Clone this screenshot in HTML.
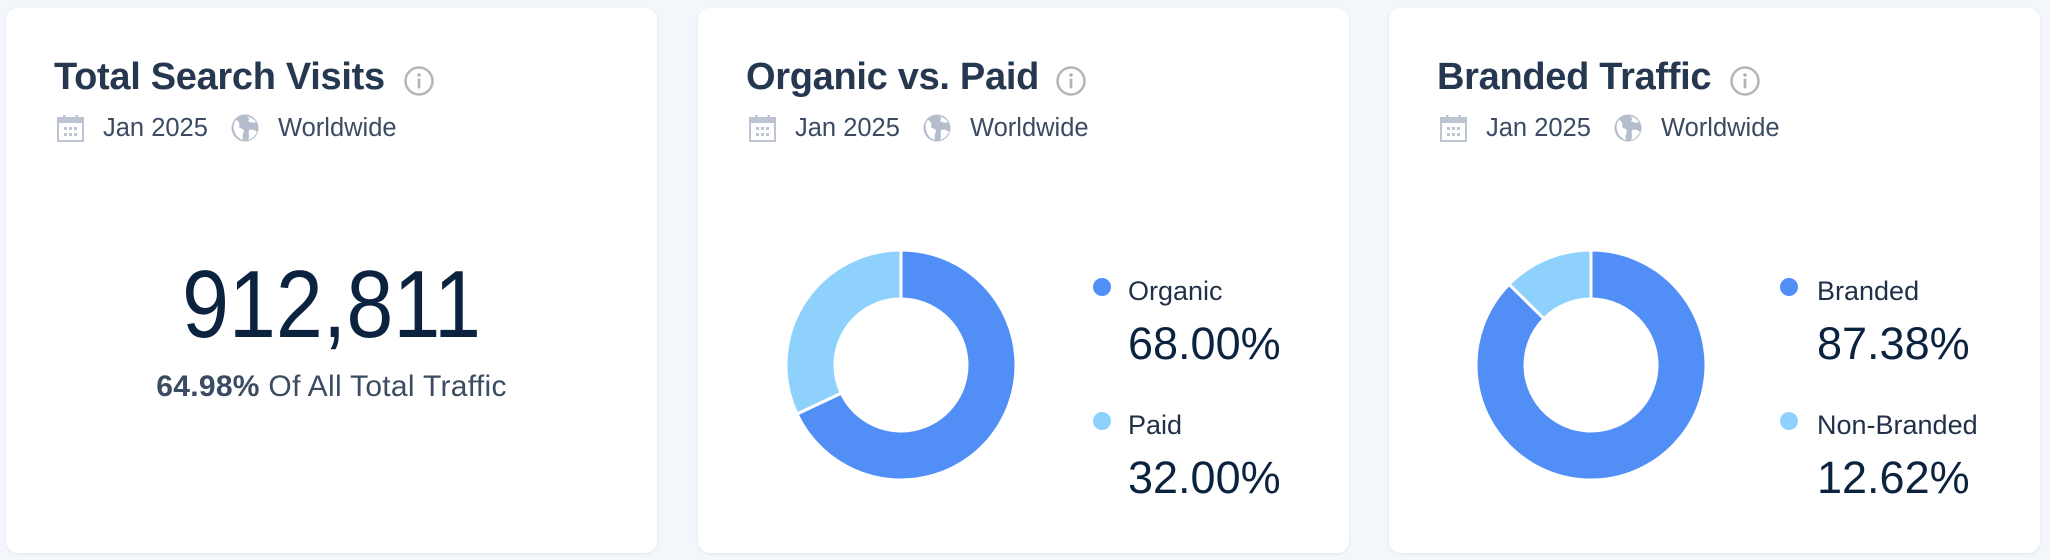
<!DOCTYPE html>
<html><head><meta charset="utf-8"><style>
*{margin:0;padding:0;box-sizing:border-box}
body{width:2050px;height:560px;background:#F3F6FA;font-family:"Liberation Sans",sans-serif;position:relative;overflow:hidden}
.card{position:absolute;top:8px;height:545px;width:651px;background:#fff;border-radius:12px;box-shadow:0 1px 3px rgba(40,60,90,.08)}
.t{position:absolute;left:48px;top:48px;font-size:38px;font-weight:bold;color:#26384F;white-space:nowrap;letter-spacing:-0.3px}
.abs{position:absolute}
.meta{position:absolute;top:106px;font-size:25.5px;color:#3A4B62;white-space:nowrap}
.big{position:absolute;left:0;width:651px;text-align:center;top:249px;font-size:96px;color:#0C2340;line-height:1;transform:scaleX(0.88)}
.sub{position:absolute;left:0;width:651px;text-align:center;top:362px;font-size:30px;color:#3A4B62;white-space:nowrap;letter-spacing:0.3px}
.lab{position:absolute;font-size:27px;color:#1F3048;white-space:nowrap}
.pct{position:absolute;font-size:45px;color:#0C2340;white-space:nowrap;line-height:1}
.dot{position:absolute;width:18px;height:18px;border-radius:50%}
</style></head><body>

<div class="card" style="left:6px">
  <div class="t">Total Search Visits</div>
  <svg class="abs" style="left:397px;top:57px" width="32" height="32" viewBox="0 0 32 32"><circle cx="16" cy="16" r="13.5" fill="none" stroke="#B5B5B5" stroke-width="2.5"/><circle cx="16" cy="10" r="1.8" fill="#B5B5B5"/><rect x="14.6" y="13.5" width="2.8" height="10" rx="1" fill="#B5B5B5"/></svg>
  <svg class="abs" style="left:51px;top:106px" width="27" height="28" viewBox="0 0 27 28"><rect x="1" y="4" width="25" height="23" fill="none" stroke="#BCC4D1" stroke-width="2"/><rect x="1" y="4" width="25" height="5" fill="#BCC4D1"/><rect x="6" y="1" width="2.5" height="5" fill="#BCC4D1"/><rect x="18.5" y="1" width="2.5" height="5" fill="#BCC4D1"/><g fill="#BCC4D1"><rect x="7" y="13" width="3" height="3"/><rect x="12" y="13" width="3" height="3"/><rect x="17" y="13" width="3" height="3"/><rect x="7" y="19" width="3" height="3"/><rect x="12" y="19" width="3" height="3"/><rect x="17" y="19" width="3" height="3"/></g></svg>
  <div class="meta" style="left:97px">Jan 2025</div>
  <svg class="abs" style="left:225px;top:106px" width="28" height="28" viewBox="0 0 28 28"><circle cx="14" cy="14" r="13.5" fill="#B3BDCB"/><path d="M5 6 C8 7 9 10 8 13 C10 15 12 14 13 17 C12 20 11 22 12 26 C8 25 4 21 3 16 C2 12 3 8 5 6Z" fill="#fff"/><path d="M15 2 C18 3 19 5 17 7 C20 9 23 9 25 8 C24 6 20 3 15 2Z" fill="#fff"/><path d="M18 16 C21 15 24 16 26 18 C24 22 21 25 17 26 C19 23 17 19 18 16Z" fill="#fff"/></svg>
  <div class="meta" style="left:272px">Worldwide</div>
  <div class="big">912,811</div>
  <div class="sub"><b>64.98%</b> Of All Total Traffic</div>
</div>

<div class="card" style="left:698px">
  <div class="t">Organic vs. Paid</div>
  <svg class="abs" style="left:357px;top:57px" width="32" height="32" viewBox="0 0 32 32"><circle cx="16" cy="16" r="13.5" fill="none" stroke="#B5B5B5" stroke-width="2.5"/><circle cx="16" cy="10" r="1.8" fill="#B5B5B5"/><rect x="14.6" y="13.5" width="2.8" height="10" rx="1" fill="#B5B5B5"/></svg>
  <svg class="abs" style="left:51px;top:106px" width="27" height="28" viewBox="0 0 27 28"><rect x="1" y="4" width="25" height="23" fill="none" stroke="#BCC4D1" stroke-width="2"/><rect x="1" y="4" width="25" height="5" fill="#BCC4D1"/><rect x="6" y="1" width="2.5" height="5" fill="#BCC4D1"/><rect x="18.5" y="1" width="2.5" height="5" fill="#BCC4D1"/><g fill="#BCC4D1"><rect x="7" y="13" width="3" height="3"/><rect x="12" y="13" width="3" height="3"/><rect x="17" y="13" width="3" height="3"/><rect x="7" y="19" width="3" height="3"/><rect x="12" y="19" width="3" height="3"/><rect x="17" y="19" width="3" height="3"/></g></svg>
  <div class="meta" style="left:97px">Jan 2025</div>
  <svg class="abs" style="left:225px;top:106px" width="28" height="28" viewBox="0 0 28 28"><circle cx="14" cy="14" r="13.5" fill="#B3BDCB"/><path d="M5 6 C8 7 9 10 8 13 C10 15 12 14 13 17 C12 20 11 22 12 26 C8 25 4 21 3 16 C2 12 3 8 5 6Z" fill="#fff"/><path d="M15 2 C18 3 19 5 17 7 C20 9 23 9 25 8 C24 6 20 3 15 2Z" fill="#fff"/><path d="M18 16 C21 15 24 16 26 18 C24 22 21 25 17 26 C19 23 17 19 18 16Z" fill="#fff"/></svg>
  <div class="meta" style="left:272px">Worldwide</div>
  <svg class="abs" style="left:83px;top:237px" width="240" height="240" viewBox="-120 -120 240 240">
    <path d="M0,-115 A115,115 0 1 1 -104.05,48.97 L-59.72,28.10 A66,66 0 1 0 0,-66 Z" fill="#518FF7" stroke="#fff" stroke-width="3" stroke-linejoin="round"/>
    <path d="M-104.05,48.97 A115,115 0 0 1 0,-115 L0,-66 A66,66 0 0 0 -59.72,28.10 Z" fill="#8FD1FD" stroke="#fff" stroke-width="3" stroke-linejoin="round"/>
  </svg>
  <div class="dot" style="left:395px;top:270px;background:#518FF7"></div>
  <div class="lab" style="left:430px;top:268px">Organic</div>
  <div class="pct" style="left:430px;top:313px">68.00%</div>
  <div class="dot" style="left:395px;top:404px;background:#8FD1FD"></div>
  <div class="lab" style="left:430px;top:402px">Paid</div>
  <div class="pct" style="left:430px;top:447px">32.00%</div>
</div>

<div class="card" style="left:1389px">
  <div class="t">Branded Traffic</div>
  <svg class="abs" style="left:340px;top:57px" width="32" height="32" viewBox="0 0 32 32"><circle cx="16" cy="16" r="13.5" fill="none" stroke="#B5B5B5" stroke-width="2.5"/><circle cx="16" cy="10" r="1.8" fill="#B5B5B5"/><rect x="14.6" y="13.5" width="2.8" height="10" rx="1" fill="#B5B5B5"/></svg>
  <svg class="abs" style="left:51px;top:106px" width="27" height="28" viewBox="0 0 27 28"><rect x="1" y="4" width="25" height="23" fill="none" stroke="#BCC4D1" stroke-width="2"/><rect x="1" y="4" width="25" height="5" fill="#BCC4D1"/><rect x="6" y="1" width="2.5" height="5" fill="#BCC4D1"/><rect x="18.5" y="1" width="2.5" height="5" fill="#BCC4D1"/><g fill="#BCC4D1"><rect x="7" y="13" width="3" height="3"/><rect x="12" y="13" width="3" height="3"/><rect x="17" y="13" width="3" height="3"/><rect x="7" y="19" width="3" height="3"/><rect x="12" y="19" width="3" height="3"/><rect x="17" y="19" width="3" height="3"/></g></svg>
  <div class="meta" style="left:97px">Jan 2025</div>
  <svg class="abs" style="left:225px;top:106px" width="28" height="28" viewBox="0 0 28 28"><circle cx="14" cy="14" r="13.5" fill="#B3BDCB"/><path d="M5 6 C8 7 9 10 8 13 C10 15 12 14 13 17 C12 20 11 22 12 26 C8 25 4 21 3 16 C2 12 3 8 5 6Z" fill="#fff"/><path d="M15 2 C18 3 19 5 17 7 C20 9 23 9 25 8 C24 6 20 3 15 2Z" fill="#fff"/><path d="M18 16 C21 15 24 16 26 18 C24 22 21 25 17 26 C19 23 17 19 18 16Z" fill="#fff"/></svg>
  <div class="meta" style="left:272px">Worldwide</div>
  <svg class="abs" style="left:82px;top:237px" width="240" height="240" viewBox="-120 -120 240 240">
    <path d="M0,-115 A115,115 0 1 1 -81.9,-80.73 L-47.0,-46.33 A66,66 0 1 0 0,-66 Z" fill="#518FF7" stroke="#fff" stroke-width="3" stroke-linejoin="round"/>
    <path d="M-81.9,-80.73 A115,115 0 0 1 0,-115 L0,-66 A66,66 0 0 0 -47.0,-46.33 Z" fill="#8FD1FD" stroke="#fff" stroke-width="3" stroke-linejoin="round"/>
  </svg>
  <div class="dot" style="left:391px;top:270px;background:#518FF7"></div>
  <div class="lab" style="left:428px;top:268px">Branded</div>
  <div class="pct" style="left:428px;top:313px">87.38%</div>
  <div class="dot" style="left:391px;top:404px;background:#8FD1FD"></div>
  <div class="lab" style="left:428px;top:402px">Non-Branded</div>
  <div class="pct" style="left:428px;top:447px">12.62%</div>
</div>
</body></html>
